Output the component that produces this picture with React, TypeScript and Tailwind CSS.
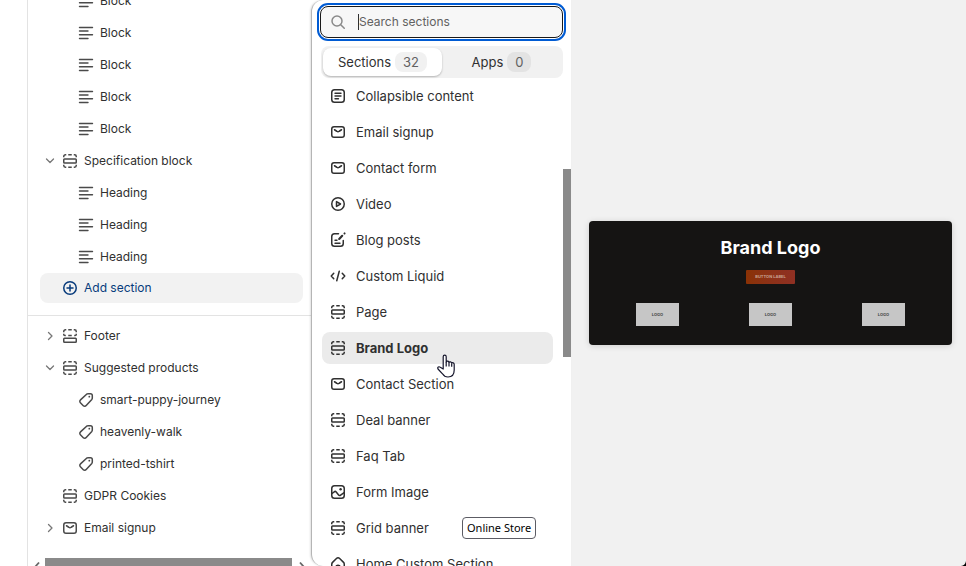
import type { ReactNode } from "react";

function Glyph({ children, className = "text-[#4a4a4a]" }: { children: ReactNode; className?: string }) {
  return (
    <svg
      viewBox="0 0 20 20"
      className={"size-5 shrink-0 " + className}
      fill="none"
      stroke="currentColor"
      strokeWidth="1.5"
      strokeLinecap="round"
      strokeLinejoin="round"
      aria-hidden="true"
    >
      {children}
    </svg>
  );
}

const shapes: Record<string, ReactNode> = {
  text: <path d="M3.5 4.5h13M3.5 8h8.5M3.5 11.75h13M3.5 15.5h8.5" strokeWidth="1.4" />,
  section: (
    <>
      <path strokeLinecap="butt" d="M3.75 6.250v-.8c0-.9.8-1.700 1.700-1.700h.8M8.250 3.750h3.500M13.750 3.750h.8c.9 0 1.700.8 1.700 1.700v.8M3.750 13.750v.8c0 .9.8 1.700 1.700 1.700h.8M8.250 16.250h3.500M13.750 16.250h.8c.9 0 1.700-.8 1.700-1.700v-.8" />
      <rect x="3.75" y="8" width="12.500" height="4" rx=".75" />
    </>
  ),
  footer: (
    <>
      <path strokeLinecap="butt" d="M3.750 6.250v-.8c0-.9.8-1.700 1.700-1.700h.8M8.250 3.750h3.500M13.750 3.750h.8c.9 0 1.700.8 1.700 1.700v.8M3.750 7.750v.7c0 .6.5 1.050 1.050 1.050h1M8.250 9.500h3.500M16.250 7.750v.7c0 .6-.5 1.050-1.050 1.050h-1" />
      <rect x="3.75" y="12.250" width="12.500" height="4" rx=".75" />
    </>
  ),
  plus: (
    <>
      <circle cx="10" cy="10" r="6.25" />
      <path d="M10 7v6M7 10h6" />
    </>
  ),
  tag: (
    <>
      <path d="M10.6 4.2c.4-.3.9-.5 1.4-.5h2.5c1 0 1.8.8 1.8 1.8V8c0 .5-.2 1-.5 1.4l-5.6 6.2c-.8.9-2.1.9-2.9.1l-2.9-2.9c-.8-.8-.8-2.1.1-2.9z" />
      <circle cx="13.3" cy="6.7" r=".9" fill="currentColor" stroke="none" />
    </>
  ),
  mail: (
    <>
      <rect x="3.75" y="4.75" width="12.5" height="10.5" rx="2.25" />
      <path d="m6.500 7.750 2.300 1.500c.7.5 1.700.5 2.400 0l2.300-1.500" />
    </>
  ),
  collapsible: (
    <>
      <rect x="3.75" y="3.75" width="12.5" height="12.5" rx="2.75" />
      <path d="M7 7.250h6M7 10h6M7 12.750h3.500" strokeWidth="1.4" />
    </>
  ),
  video: (
    <>
      <circle cx="10" cy="10" r="6.25" />
      <path d="M8.500 7.600v4.800l4-2.400z" />
    </>
  ),
  blog: (
    <>
      <path d="M10.500 3.750H6.500c-1.500 0-2.750 1.250-2.750 2.750v7c0 1.500 1.250 2.750 2.750 2.750h6c1.500 0 2.750-1.250 2.750-2.750V10.500" />
      <path d="M7 13.250h5M7 10.250h2" strokeWidth="1.4" />
      <path d="m11.200 8.900 3-3.100" strokeWidth="2.2" />
      <path d="m16.500 3.500.1-.1" strokeWidth="2" />
    </>
  ),
  code: <path d="M5.750 7.250 3.250 10l2.500 2.750M14.250 7.250l2.500 2.750-2.500 2.750M11.250 5.250l-2.500 9.500" />,
  image: (
    <>
      <rect x="3.750" y="3.750" width="12.500" height="12.500" rx="2.750" />
      <path d="m4 11.500 2.200-1.700c.6-.5 1.500-.4 2 .2l2.400 3c.5.6 1.400.7 2 .1l3.200-2.300" />
      <circle cx="12.600" cy="7.300" r="1.200" fill="currentColor" stroke="none" />
    </>
  ),
  home: (
    <path d="M3.750 10.300c0-.7.3-1.400.8-1.900l3.900-3.900c.9-.9 2.300-.9 3.200 0l3.900 3.900c.5.5.7 1.200.7 1.900v4.200c0 1-.8 1.750-1.750 1.750H12v-3.500c0-1-.8-1.500-2-1.500s-2 .5-2 1.500v3.500H5.500c-1 0-1.750-.8-1.750-1.750z" />
  ),
};

type Node = { label: string; icon: string; child?: boolean; chevron?: "open" | "closed" };

const upper: Node[] = [
  ...Array.from({ length: 5 }, () => ({ label: "Block", icon: "text", child: true })),
  { label: "Specification block", icon: "section", chevron: "open" },
  ...Array.from({ length: 3 }, () => ({ label: "Heading", icon: "text", child: true })),
];

const lower: Node[] = [
  { label: "Footer", icon: "footer", chevron: "closed" },
  { label: "Suggested products", icon: "section", chevron: "open" },
  { label: "smart-puppy-journey", icon: "tag", child: true },
  { label: "heavenly-walk", icon: "tag", child: true },
  { label: "printed-tshirt", icon: "tag", child: true },
  { label: "GDPR Cookies", icon: "section" },
  { label: "Email signup", icon: "mail", chevron: "closed" },
];

const sections = [
  ["Collapsible content", "collapsible"],
  ["Email signup", "mail"],
  ["Contact form", "mail"],
  ["Video", "video"],
  ["Blog posts", "blog"],
  ["Custom Liquid", "code"],
  ["Page", "section"],
  ["Brand Logo", "section"],
  ["Contact Section", "mail"],
  ["Deal banner", "section"],
  ["Faq Tab", "section"],
  ["Form Image", "image"],
  ["Grid banner", "section"],
  ["Home Custom Section", "home"],
];

function TreeRow({ node }: { node: Node }) {
  return (
    <li className={"flex h-8 items-center " + (node.child ? "pl-12" : "pl-3")}>
      {!node.child && (
        <span className="flex w-5 shrink-0 justify-center">
          {node.chevron && (
            <button type="button" aria-label={"Toggle " + node.label}>
              <svg viewBox="0 0 12 12" className="block size-3 text-[#777]" fill="none" stroke="currentColor" strokeWidth="1.3" strokeLinecap="round" strokeLinejoin="round">
                <path d={node.chevron === "open" ? "M2.500 4 6 7.500 9.500 4" : "M4.500 2.500 8 6 4.500 9.500"} />
              </svg>
            </button>
          )}
        </span>
      )}
      <button type="button" className="flex items-center gap-1">
        <Glyph>{shapes[node.icon]}</Glyph>
        <span>{node.label}</span>
      </button>
    </li>
  );
}

function Sidebar() {
  return (
    <aside className="flex w-[284px] shrink-0 flex-col border-l border-[#e3e3e3] bg-white text-xs leading-5 text-[#303030]">
      <ul className="-mt-[15px]">
        {upper.map((n, i) => (
          <TreeRow key={i} node={n} />
        ))}
      </ul>
      <button type="button" className="mr-2 ml-3 flex h-[30px] shrink-0 items-center gap-1 rounded-lg bg-[#f2f2f2] pl-5 text-[#073b7c]">
        <Glyph className="text-[#073b7c]">{shapes.plus}</Glyph>
        Add section
      </button>
      <ul className="mt-3 border-t border-[#e3e3e3] pt-1">
        {lower.map((n) => (
          <TreeRow key={n.label} node={n} />
        ))}
      </ul>
      <div className="mt-auto flex h-2 items-start px-1">
        <svg viewBox="0 0 8 8" className="size-2 shrink-0 text-[#666]" fill="none" stroke="currentColor" strokeWidth="1.8"><path d="M7 4.500 3 9" /></svg>
        <div className="mr-[7px] ml-[5px] h-2 flex-1 bg-[#8a8a8a]" />
        <svg viewBox="0 0 8 8" className="size-2 shrink-0 text-[#666]" fill="none" stroke="currentColor" strokeWidth="1.8"><path d="M1 4.500 5 9" /></svg>
      </div>
    </aside>
  );
}

function SectionPicker() {
  return (
    <section className="relative flex w-[260px] shrink-0 flex-col overflow-hidden rounded-l-xl border-l border-[#b5b5b5] bg-white text-[13px] leading-5 text-[#303030] shadow-[-1px_0_2px_#0000001f]">
      <label className="mt-[6px] mr-2 ml-2 flex h-8 shrink-0 items-center rounded-lg border border-[#1a1a1a] bg-[#f7f7f7] pl-[7px] outline-2 outline-offset-1 outline-[#005bd3]">
        <Glyph className="text-[#8a8a8a]">
          <circle cx="9" cy="9" r="5" />
          <path d="m12.750 12.750 3.500 3.500" />
        </Glyph>
        <span className="sr-only">Search sections</span>
        <span className="ml-[10px] h-4 w-px bg-[#303030]" />
        <input type="search" placeholder="Search sections" className="h-6 min-w-0 flex-1 bg-transparent text-xs leading-6 outline-none placeholder:text-[#616161]" />
      </label>
      <div className="mt-2 mr-2 ml-[9px] grid h-8 shrink-0 grid-cols-2 rounded-lg bg-[#f1f1f1] p-0.5">
        <button type="button" className="flex items-center justify-center gap-1 rounded-lg bg-white shadow-[0_1px_2px_#00000040]">
          Sections <span className="rounded-lg bg-[#f1f1f1] px-2 text-[#616161]">32</span>
        </button>
        <button type="button" className="flex items-center justify-center gap-1">
          Apps <span className="rounded-lg bg-[#e3e3e3] px-2 text-[#616161]">0</span>
        </button>
      </div>
      <div className="mt-0.5 flex min-h-0 flex-1">
        <ul className="flex min-w-0 flex-1 flex-col gap-1 overflow-hidden pr-[10px] pl-[10px]">
          {sections.map(([label, icon]) => (
            <li key={label} className="shrink-0">
              <button
                type="button"
                className={
                  "flex h-8 w-full items-center gap-2 rounded-lg pl-1.5 " +
                  (label === "Brand Logo" ? "bg-[#ebebeb] font-bold" : "")
                }
              >
                <Glyph className="text-[#303030]">{shapes[icon]}</Glyph>
                {label}
              </button>
            </li>
          ))}
        </ul>
        <div className="w-2 shrink-0 pt-[89px]">
          <div className="h-[188px] bg-[#8a8a8a]" />
        </div>
      </div>
      <div role="tooltip" className="absolute top-[517px] left-[150px] rounded border border-[#5c5c64] bg-white px-1 font-['Noto_Sans',sans-serif] text-[11px] leading-5 text-black">
        Online Store
      </div>
      <svg viewBox="0 0 18 25" className="absolute top-[354px] left-[125px] h-[25px] w-[18px]" fill="white" stroke="#15152b" strokeWidth="1.200" strokeLinejoin="round" aria-hidden="true">
        <path d="M6.200 15V2.800c0-2.200 3-2.200 3 0V8c.4-1.400 2.700-1.200 2.800.5.5-1.200 2.600-.8 2.700.7.600-.9 2.500-.4 2.500 1.200V16c0 4.500-2.300 7-6.200 7-3 0-4.400-1.300-5.500-3.200L1 15c-.9-1.600.9-3 2.300-1.700z" />
        <path d="M9.200 8v4.500M12 8.500v4M14.700 9.500v3.200" fill="none" />
      </svg>
    </section>
  );
}

function Preview() {
  return (
    <main className="flex min-w-0 flex-1 items-center bg-[#f1f1f1] pr-[14px] pl-[18px]">
      <article className="flex h-[124px] w-full flex-col items-center rounded bg-[#151413] pt-[14px] shadow-[0_1px_6px_#00000026]">
        <h2 className="text-[18px] leading-[26px] font-bold text-white">Brand Logo</h2>
        <button type="button" className="mt-[9px] h-[14px] w-[49px] rounded-[1px] bg-linear-to-r from-[#8a3205] to-[#8f3023] text-center text-[4px] leading-[14px] font-bold text-[#c9a292]">
          BUTTON LABEL
        </button>
        <div className="mt-[19px] grid w-full grid-cols-3 px-3">
          {[0, 1, 2].map((n) => (
            <div key={n} className="mx-auto flex h-[23px] w-[43px] items-center justify-center bg-[#c6c6c6] text-[4px] leading-none font-bold text-[#444]">
              LOGO
            </div>
          ))}
        </div>
      </article>
    </main>
  );
}

export default function App() {
  return (
    <div className="relative flex h-screen overflow-hidden bg-white font-[Inter,sans-serif]">
      <div className="w-[27px] shrink-0" />
      <Sidebar />
      <SectionPicker />
      <Preview />
      <svg viewBox="0 0 5 5" className="absolute right-0 bottom-0 size-[5px]" aria-hidden="true">
        <path d="M5 0v5H0C3 4.500 4.500 3 5 0z" fill="#000" />
      </svg>
    </div>
  );
}
